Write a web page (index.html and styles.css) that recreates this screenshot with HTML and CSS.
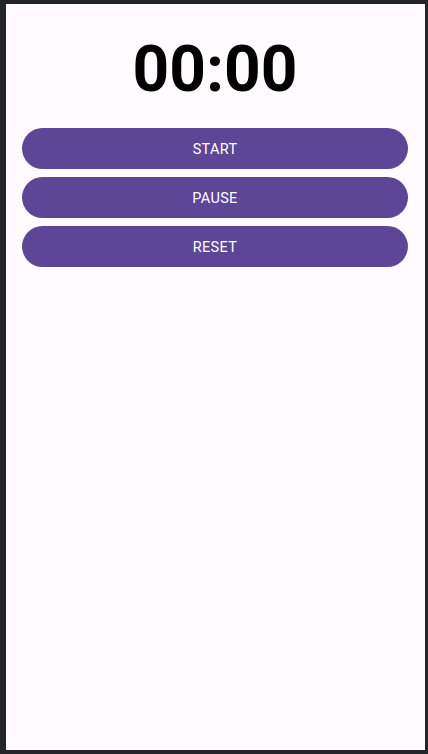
FILE: index.html
```html
<!DOCTYPE html>
<html>
<head>
<meta charset="utf-8">
<link rel="stylesheet" href="styles.css">
</head>
<body>
<div class="frame">
  <div class="screen">
    <div class="timer">00:00</div>
    <div class="buttons">
      <button class="btn">START</button>
      <button class="btn">PAUSE</button>
      <button class="btn">RESET</button>
    </div>
  </div>
</div>
</body>
</html>
```
FILE: styles.css
```css
html, body {
  margin: 0;
  padding: 0;
  background: #242526;
}
.frame {
  box-sizing: border-box;
  width: 428px;
  height: 754px;
  border-style: solid;
  border-color: #242526;
  border-width: 4px 3px 4px 6px;
}
.screen {
  height: 100%;
  background: #fffbfe;
  display: flex;
  flex-direction: column;
  padding: 0 17px 0 16px;
  box-sizing: border-box;
}
.timer {
  font-family: Roboto, "Noto Sans", sans-serif;
  font-weight: 700;
  font-size: 64px;
  line-height: 78px;
  text-align: center;
  color: #000;
  margin-top: 27px;
  margin-bottom: 19px;
}
.buttons {
  display: flex;
  flex-direction: column;
  gap: 8px;
}
.btn {
  height: 41px;
  border: none;
  border-radius: 21px;
  background: #5d4696;
  color: #fff;
  font-family: Roboto, "Noto Sans", sans-serif;
  font-weight: 400;
  font-size: 14.5px;
  letter-spacing: 0.3px;
  padding: 2px 0 0;
}
```
